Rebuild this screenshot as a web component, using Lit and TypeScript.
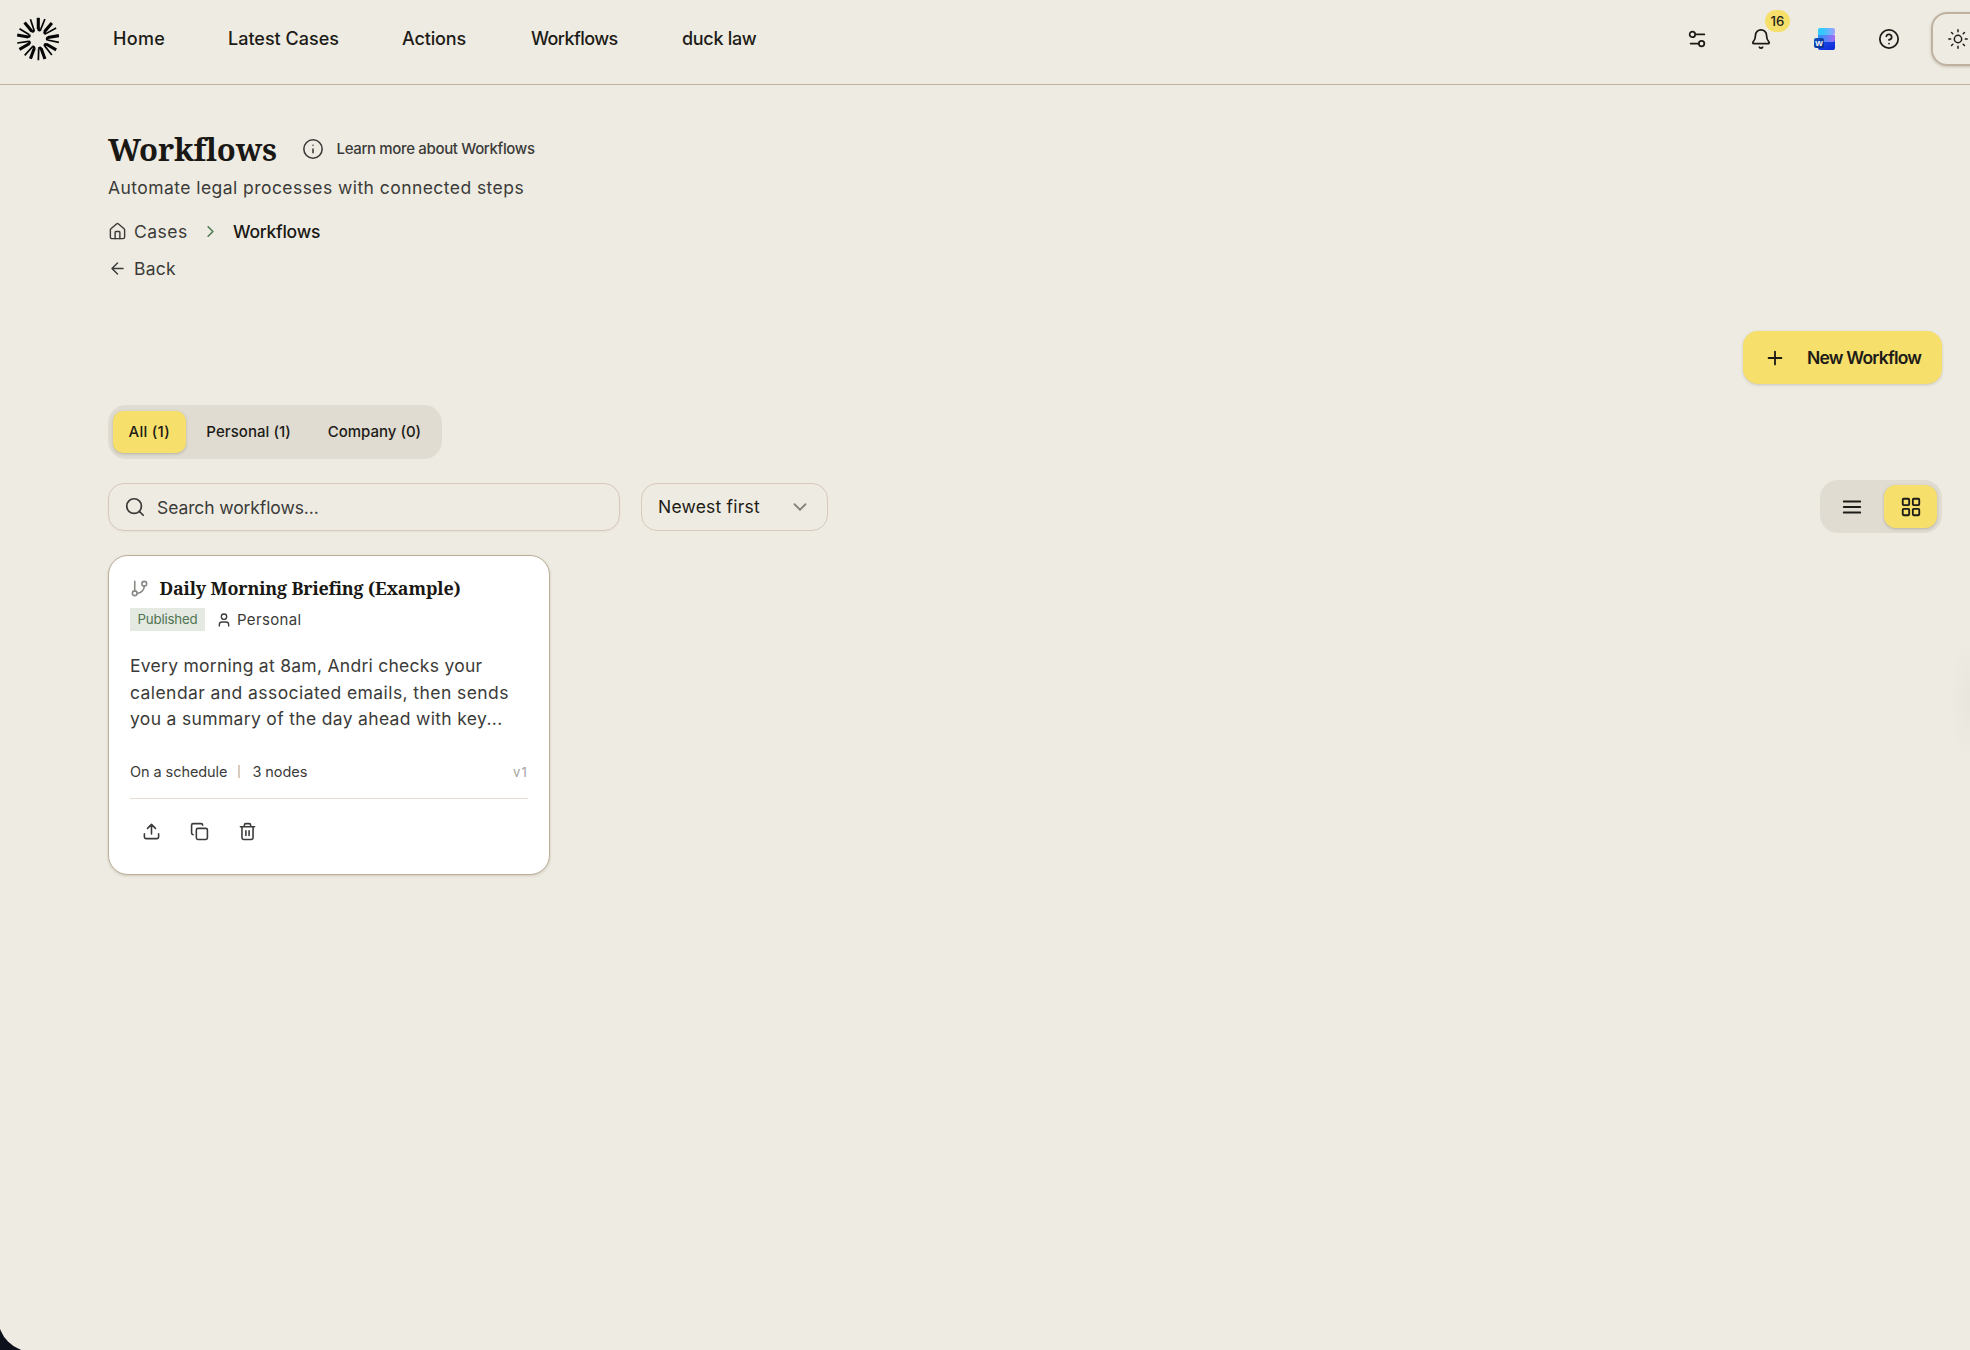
import { LitElement, html, css, svg } from "lit";
import { customElement, property, state } from "lit/decorators.js";

const ICONS: Record<string, unknown> = {
  settings: svg`<path d="M20 7h-9M14 17H5"/><circle cx="17" cy="17" r="3"/><circle cx="7" cy="7" r="3"/>`,
  bell: svg`<path d="M10.268 21a2 2 0 0 0 3.464 0"/><path d="M3.262 15.326A1 1 0 0 0 4 17h16a1 1 0 0 0 .74-1.673C19.41 13.956 18 12.499 18 8A6 6 0 0 0 6 8c0 4.499-1.411 5.956-2.738 7.326"/>`,
  help: svg`<circle cx="12" cy="12" r="10"/><path d="M9.09 9a3 3 0 0 1 5.83 1c0 2-3 3-3 3M12 17h.01"/>`,
  sun: svg`<circle cx="12" cy="12" r="4"/><path d="M12 2v2M12 20v2M4.93 4.93l1.41 1.41M17.66 17.66l1.41 1.41M2 12h2M20 12h2M6.34 17.66l-1.41 1.41M19.07 4.93l-1.41 1.41"/>`,
  info: svg`<circle cx="12" cy="12" r="10"/><path d="M12 16v-4M12 8h.01"/>`,
  house: svg`<path d="M15 21v-8a1 1 0 0 0-1-1h-4a1 1 0 0 0-1 1v8"/><path d="M3 10a2 2 0 0 1 .709-1.528l7-5.999a2 2 0 0 1 2.582 0l7 5.999A2 2 0 0 1 21 10v9a2 2 0 0 1-2 2H5a2 2 0 0 1-2-2z"/>`,
  right: svg`<path d="m9 18 6-6-6-6"/>`,
  down: svg`<path d="m6 9 6 6 6-6"/>`,
  back: svg`<path d="m12 19-7-7 7-7M19 12H5"/>`,
  plus: svg`<path d="M5 12h14M12 5v14"/>`,
  search: svg`<circle cx="11" cy="11" r="8"/><path d="m21 21-4.3-4.3"/>`,
  menu: svg`<path d="M3 6h18M3 12h18M3 18h18"/>`,
  grid: svg`<rect x="3" y="3" width="7" height="7" rx="1"/><rect x="14" y="3" width="7" height="7" rx="1"/><rect x="14" y="14" width="7" height="7" rx="1"/><rect x="3" y="14" width="7" height="7" rx="1"/>`,
  branch: svg`<path d="M6 3v12"/><circle cx="18" cy="6" r="3"/><circle cx="6" cy="18" r="3"/><path d="M18 9a9 9 0 0 1-9 9"/>`,
  user: svg`<path d="M19 21v-2a4 4 0 0 0-4-4H9a4 4 0 0 0-4 4v2"/><circle cx="12" cy="7" r="4"/>`,
  upload: svg`<path d="M12 3v12M17 8l-5-5-5 5M21 15v4a2 2 0 0 1-2 2H5a2 2 0 0 1-2-2v-4"/>`,
  copy: svg`<rect x="8" y="8" width="14" height="14" rx="2"/><path d="M4 16c-1.1 0-2-.9-2-2V4c0-1.1.9-2 2-2h10c1.1 0 2 .9 2 2"/>`,
  trash: svg`<path d="M10 11v6M14 11v6M19 6v14a2 2 0 0 1-2 2H7a2 2 0 0 1-2-2V6M3 6h18M8 6V4a2 2 0 0 1 2-2h4a2 2 0 0 1 2 2v2"/>`,
};

@customElement("line-icon")
class LineIcon extends LitElement {
  static styles = css`
    :host { display: block; flex: none; }
    svg { display: block; fill: none; stroke: currentColor; stroke-linecap: round; stroke-linejoin: round; }
  `;
  @property() name = "";
  @property({ type: Number }) size = 22;
  @property({ type: Number }) weight = 2;
  render() {
    return html`<svg width=${this.size} height=${this.size} viewBox="0 0 24 24" stroke-width=${this.weight}>${ICONS[this.name]}</svg>`;
  }
}

@customElement("burst-logo")
class BurstLogo extends LitElement {
  static styles = css`
    :host { display: block; }
    svg { display: block; fill: none; stroke: #050505; }
  `;
  render() {
    return html`<svg width="44" height="44" viewBox="-22 -22 44 44">
      ${[0, 40, 80, 120, 160, 200, 240, 280, 320].map(
        (a) => svg`<g transform="rotate(${a})">
          <path stroke-width="3.1" d="M0.3 -21.2V-10"/>
          <path stroke-width="2.4" stroke-linejoin="round" d="M0.3 -10.5Q0.6 -7.8 2.7 -9.4"/>
          <path stroke-width="1.7" d="M2.6 -9.2L6.9 -20"/>
        </g>`
      )}
    </svg>`;
  }
}

@customElement("word-logo")
class WordLogo extends LitElement {
  static styles = css`
    :host { display: block; }
    svg { display: block; }
    text { font: 700 8px "Liberation Sans", sans-serif; fill: #fff; }
  `;
  render() {
    return html`<svg width="22" height="22" viewBox="0 0 22 22">
      <defs>
        <linearGradient id="top"><stop offset=".3" stop-color="#35c8fd"/><stop offset="1" stop-color="#a2a0ff"/></linearGradient>
        <linearGradient id="mid"><stop offset=".2" stop-color="#3a8ff8"/><stop offset="1" stop-color="#a46bf6"/></linearGradient>
        <linearGradient id="low" x2="1" y2="1"><stop offset="0" stop-color="#1b55e6"/><stop offset="1" stop-color="#1024d8"/></linearGradient>
        <linearGradient id="tag" x2="1" y2="1"><stop offset="0" stop-color="#1656c9"/><stop offset="1" stop-color="#082a86"/></linearGradient>
      </defs>
      <path fill="url(#low)" d="M4 12h17v8a2 2 0 0 1-2 2H6a2 2 0 0 1-2-2z"/>
      <path fill="url(#mid)" d="M4 7h17v5a2 2 0 0 1-2 2H4z"/>
      <path fill="url(#top)" d="M6 0h13a2 2 0 0 1 2 2v3a2 2 0 0 1-2 2H4V2a2 2 0 0 1 2-2z"/>
      <rect y="10" width="10" height="10" rx="2" fill="url(#tag)"/>
      <text x="5" y="17.9" text-anchor="middle">W</text>
    </svg>`;
  }
}

@customElement("workflow-card")
class WorkflowCard extends LitElement {
  static styles = css`
    :host { display: block; width: 442px; }
    .card { box-sizing: border-box; height: 320px; padding: 17px 21px 0; background: #fff; border: 1px solid #bcae98; border-radius: 20px; box-shadow: 0 1px 3px rgba(60, 50, 30, .18); color: #3b3b39; white-space: nowrap; }
    .title { display: flex; align-items: center; gap: 10.5px; height: 30px; }
    .glyph { color: #888884; }
    .name { margin: 0; font: 700 17.9px/30px "Noto Serif", "Liberation Serif", serif; letter-spacing: -.17px; color: #1a1814; }
    .tags { display: flex; align-items: center; height: 23px; margin-top: 5px; }
    .status { width: 75px; text-align: center; line-height: 23px; font-size: 13.3px; letter-spacing: -.18px; background: #e4e9e2; color: #4f7450; }
    .owner { display: flex; align-items: center; gap: 5px; margin-left: 11px; font-size: 15px; letter-spacing: .36px; }
    .text { margin-top: 22px; font-size: 17.5px; line-height: 26.5px; }
    .a { letter-spacing: .27px; }
    .b { letter-spacing: .42px; }
    .c { letter-spacing: .33px; }
    .meta { display: flex; align-items: center; height: 22px; margin-top: 28px; font-size: 14.5px; letter-spacing: -.07px; }
    .bar { width: 2px; height: 13px; margin: 0 12px 0 11px; background: #dacdc0; }
    .version { margin-left: auto; font-size: 13px; letter-spacing: 1.2px; color: #a5a5a2; }
    .actions { display: flex; align-items: center; gap: 29px; margin-top: 15px; padding: 0 11.5px; height: 65px; border-top: 1px solid #e5ddd2; }
  `;
  render() {
    return html`<article class="card">
      <div class="title"><line-icon class="glyph" name="branch" size="19"></line-icon><h2 class="name">Daily Morning Briefing (Example)</h2></div>
      <div class="tags"><span class="status">Published</span><span class="owner"><line-icon name="user" size="16"></line-icon>Personal</span></div>
      <div class="text">
        <div class="a">Every morning at 8am, Andri checks your</div>
        <div class="b">calendar and associated emails, then sends</div>
        <div class="c">you a summary of the day ahead with key...</div>
      </div>
      <div class="meta"><span>On a schedule</span><i class="bar"></i><span>3 nodes</span><span class="version">v1</span></div>
      <div class="actions">
        ${["upload", "copy", "trash"].map((n) => html`<line-icon name=${n} size="19"></line-icon>`)}
      </div>
    </article>`;
  }
}

@customElement("app-root")
class AppRoot extends LitElement {
  static styles = css`
    :host { display: block; position: relative; height: 1350px; overflow: hidden; background: #0d111b; font-family: Inter, "Liberation Sans", sans-serif; color: #1d1b17; }
    .page { box-sizing: border-box; height: 1352px; margin-left: -2px; padding-left: 2px; background: #eeebe2; border-bottom-left-radius: 35px; white-space: nowrap; }
    .top { display: flex; align-items: center; box-sizing: border-box; height: 85px; padding: 0 0 7px 16px; border-bottom: 1px solid #bfb19b; }
    .nav { display: flex; gap: 64px; margin-left: 53px; font-size: 18px; font-weight: 500; line-height: 26px; }
    .n0 { width: 51px; letter-spacing: .3px; }
    .n1 { width: 110px; }
    .n2 { width: 65px; letter-spacing: -.14px; }
    .n3 { width: 87px; letter-spacing: -.58px; }
    .n4 { width: 75px; letter-spacing: -.3px; }
    .tools { display: flex; align-items: center; margin: 0 -15px 0 auto; }
    .tool { display: grid; place-items: center; position: relative; width: 64px; height: 54px; }
    .count { position: absolute; left: 36px; top: -2px; width: 25px; height: 22px; border-radius: 11px; background: #f6df6b; font: 500 13.2px/22px Inter, sans-serif; letter-spacing: .1px; text-align: center; }
    .theme { display: grid; place-items: center; box-sizing: border-box; width: 54px; height: 54px; margin-left: 10px; border: 2px solid #bfb19f; border-radius: 16px; box-shadow: 0 1px 3px rgba(60, 50, 30, .22); }
    .main { padding: 44px 28px 0 108px; }
    .head { display: flex; align-items: center; height: 40px; }
    .title { margin: 0; width: 193.5px; font: 700 31px/39px "Noto Serif", "Liberation Serif", serif; letter-spacing: -.15px; color: #1a1814; }
    .learn { display: flex; align-items: center; gap: 13px; color: #3b3b39; font-size: 15px; font-weight: 500; letter-spacing: -.35px; line-height: 20px; }
    .sub { margin-top: 6px; font-size: 17.5px; line-height: 26px; letter-spacing: .44px; color: #3b3b39; }
    .crumbs { display: flex; align-items: center; height: 26px; margin-top: 17px; font-size: 17.5px; color: #3b3b39; }
    .cases { margin-left: 7px; width: 66.5px; letter-spacing: .48px; }
    .chev { color: #4f7a55; }
    .here { margin-left: 13.5px; font-weight: 500; letter-spacing: -.25px; color: #1a1814; }
    .back { display: flex; align-items: center; gap: 7px; height: 26px; margin-top: 11px; font-size: 17.5px; letter-spacing: .24px; color: #3b3b39; }
    .create { display: flex; align-items: center; box-sizing: border-box; width: 199px; height: 53px; margin: 50px 0 0 auto; padding: 0 0 0 20.5px; gap: 21.5px; border-radius: 15px; background: #f6df6b; box-shadow: 0 1px 3px rgba(60, 50, 30, .2); font-size: 17.5px; font-weight: 600; letter-spacing: -.8px; }
    .tabs { display: inline-flex; align-items: center; box-sizing: border-box; width: 334px; height: 54px; margin-top: 21px; padding: 0 5px; border-radius: 18px; background: #e0dcd1; font-size: 15px; font-weight: 500; line-height: 42px; text-align: center; vertical-align: top; }
    .tab { border-radius: 10px; }
    .t0 { width: 73px; letter-spacing: .28px; }
    .t1 { width: 127px; letter-spacing: .05px; }
    .t2 { width: 126px; }
    .on { background: #f6df6b; box-shadow: 0 1px 3px rgba(60, 50, 30, .25); }
    .filters { display: flex; align-items: center; height: 53px; margin-top: 21px; font-size: 17.5px; }
    .search { display: flex; align-items: center; gap: 11px; box-sizing: border-box; width: 512px; height: 48px; margin-top: 1px; padding-left: 15px; border: 1px solid #d7c9bb; border-radius: 16px; box-shadow: 0 1px 2px rgba(60, 50, 30, .06); color: #3b3b39; letter-spacing: -.1px; }
    .sort { display: flex; align-items: center; justify-content: space-between; box-sizing: border-box; width: 187px; height: 48px; margin: 1px 0 0 21px; padding: 0 16px; border: 1px solid #d7c9bb; border-radius: 16px; letter-spacing: .2px; }
    .picked { padding-bottom: 2px; }
    .down { color: #85837c; }
    .views { display: flex; align-items: center; box-sizing: border-box; width: 122px; height: 53px; margin-left: auto; padding: 0 5px; border-radius: 18px; background: #e0dcd1; }
    .view { display: grid; place-items: center; width: 53px; height: 43px; border-radius: 12px; }
    .views .view + .view { margin-left: 6px; }
    .list { margin-top: 22px; }
    .glow { position: absolute; right: 0; top: 630px; width: 20px; height: 140px; background: radial-gradient(ellipse 20px 62px at 100% 50%, rgba(80, 80, 80, .035), transparent); }
  `;
  @state() private tab = 0;
  @state() private view = "grid";

  render() {
    const nav = ["Home", "Latest Cases", "Actions", "Workflows", "duck law"];
    const tabs = ["All (1)", "Personal (1)", "Company (0)"];
    return html`<div class="page">
      <header class="top">
        <burst-logo></burst-logo>
        <nav class="nav">${nav.map((n, i) => html`<span class="n${i}">${n}</span>`)}</nav>
        <div class="tools">
          <span class="tool"><line-icon name="settings" weight="1.9"></line-icon></span>
          <span class="tool"><line-icon name="bell" size="22" weight="1.9"></line-icon><span class="count">16</span></span>
          <span class="tool"><word-logo></word-logo></span>
          <span class="tool"><line-icon name="help" size="22" weight="1.9"></line-icon></span>
          <span class="theme"><line-icon name="sun" size="22" weight="1.6"></line-icon></span>
        </div>
      </header>
      <main class="main">
        <div class="head"><h1 class="title">Workflows</h1><span class="learn"><line-icon name="info" size="22" weight="1.7"></line-icon>Learn more about Workflows</span></div>
        <div class="sub">Automate legal processes with connected steps</div>
        <div class="crumbs"><line-icon name="house" size="19" weight="1.8"></line-icon><span class="cases">Cases</span><line-icon class="chev" name="right" size="19"></line-icon><span class="here">Workflows</span></div>
        <div class="back"><line-icon name="back" size="19" weight="1.8"></line-icon>Back</div>
        <div class="create"><line-icon name="plus" size="22"></line-icon>New Workflow</div>
        <div class="tabs">${tabs.map((t, i) => html`<span class="tab t${i} ${i === this.tab ? "on" : ""}" @click=${() => (this.tab = i)}>${t}</span>`)}</div>
        <div class="filters">
          <div class="search"><line-icon name="search" size="22" weight="1.9"></line-icon>Search workflows...</div>
          <div class="sort"><span class="picked">Newest first</span><line-icon class="down" name="down" size="22"></line-icon></div>
          <div class="views">${["menu", "grid"].map((v) => html`<span class="view ${v === this.view ? "on" : ""}" @click=${() => (this.view = v)}><line-icon name=${v}></line-icon></span>`)}</div>
        </div>
        <div class="list"><workflow-card></workflow-card></div>
      </main>
      <div class="glow"></div>
    </div>`;
  }
}
